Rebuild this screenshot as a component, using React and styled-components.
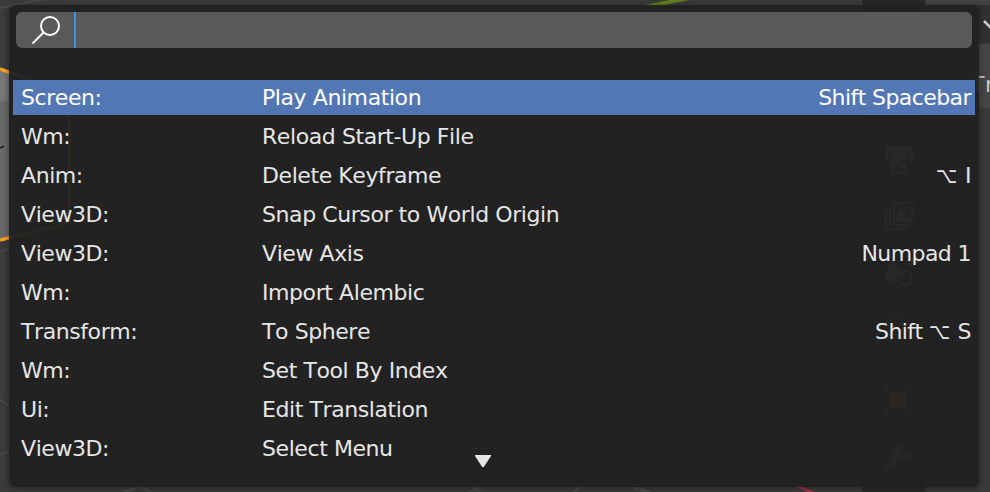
import React from "react";
import styled, { createGlobalStyle } from "styled-components";

const GlobalStyle = createGlobalStyle`
  body { margin: 0; background: #3b3b3b; overflow: hidden; }
  * { box-sizing: border-box; }
`;

const Screen = styled.div`
  position: relative;
  width: 990px;
  height: 492px;
  overflow: hidden;
  padding: 5px 11px 5px 9px;
  font-family: "DejaVu Sans", sans-serif;
  font-size: 22px;
  font-kerning: none;
`;

const Scene = styled.svg`
  position: absolute;
  inset: 0;
  display: block;
`;

const SidebarLabel = styled.span`
  position: absolute;
  left: 971px;
  top: 72px;
  line-height: 26px;
  letter-spacing: 0.5px;
  color: #c8c8c8;
`;

const Popup = styled.section`
  position: relative;
  display: flex;
  flex-direction: column;
  width: 970px;
  height: 482px;
  padding: 7px 4px 0;
  border-radius: 7px;
  background: rgba(33, 33, 33, 0.96);
  box-shadow: 0 1px 5px 1px rgba(20, 20, 20, 0.45);
`;

const SearchField = styled.div`
  display: flex;
  align-items: center;
  height: 36px;
  margin: 0 3px 32px;
  padding-left: 14px;
  border-radius: 6px;
  background: #595959;
`;

const SearchIcon = styled.svg`
  display: block;
  width: 32px;
  height: 32px;
`;

const Caret = styled.span`
  width: 2px;
  height: 36px;
  margin-left: 12px;
  background: #3399e6;
`;

const Results = styled.ul`
  display: flex;
  flex-direction: column;
  gap: 4px;
  margin: 0;
  padding: 0;
  list-style: none;
`;

const Result = styled.li`
  display: grid;
  grid-template-columns: 241px 1fr auto;
  height: 35px;
  padding: 0 4px 0 8px;
  line-height: 35px;
  white-space: nowrap;
  letter-spacing: -0.42px;
  color: ${(p) => (p.$active ? "#ffffff" : "#e6e6e6")};
  background: ${(p) => (p.$active ? "#5277b4" : "transparent")};
`;

const Shortcut = styled.span`
  letter-spacing: -0.58px;
`;

const OptionKey = styled.span`
  display: inline-block;
  margin: 0 1.5px 0 -4px;
  transform: scaleX(0.84);
  transform-origin: right;
`;

const MoreArrow = styled.svg`
  position: absolute;
  left: 466px;
  top: 450px;
  width: 16px;
  height: 12px;
`;

const RESULTS = [
  ["Screen:", "Play Animation", "Shift Spacebar"],
  ["Wm:", "Reload Start-Up File", ""],
  ["Anim:", "Delete Keyframe", "⌥ I"],
  ["View3D:", "Snap Cursor to World Origin", ""],
  ["View3D:", "View Axis", "Numpad 1"],
  ["Wm:", "Import Alembic", ""],
  ["Transform:", "To Sphere", "Shift ⌥ S"],
  ["Wm:", "Set Tool By Index", ""],
  ["Ui:", "Edit Translation", ""],
  ["View3D:", "Select Menu", ""],
];

const TABS = [134, 190, 246, 302, 374, 430];

function Viewport() {
  return (
    <Scene width="990" height="492" viewBox="0 0 990 492">
      <rect width="990" height="492" fill="#3b3b3b" />
      <g stroke="#515151" strokeWidth="2" fill="none" opacity="0.7">
        <path d="M0 455L350 320M120 494L490 322M0 400L140 486L165 500M110 500L320 400M230 322L330 400L483 494M450 500L700 395M320 370L650 494M570 494L800 350M400 466L490 423L650 492M0 252L230 150M0 8L60 -4" />
      </g>
      <path d="M0 3L130 3M60 1L240 4M300 2L600 4M0 18H12M0 31H12M0 49H12" stroke="#454545" strokeWidth="1" opacity=".6" />
      <path d="M0 69L9 72V238L0 240Z" fill="#767778" />
      <path d="M0 102L9 100V238L0 240Z" fill="#686969" />
      <path d="M0 69L69 94V223L0 240" stroke="#ff9f25" strokeWidth="3.5" fill="none" />
      <path d="M0 148L4 146" stroke="#191919" strokeWidth="1.5" />
      <path d="M69 134L330 70" stroke="#4b5926" strokeWidth="2" />
      <path d="M640 8L689 -2" stroke="#648020" strokeWidth="4" />
      <path d="M73 193L230 255L341 300L546 387L633 420L800 487L816 494" stroke="#a22f46" strokeWidth="3" fill="none" />

      <rect x="862" width="128" height="492" fill="#393939" />
      <rect x="862" width="63" height="492" fill="#292929" />
      <rect x="925" width="65" height="5" fill="#424242" />
      <rect x="925" y="5" width="65" height="38" fill="#303030" />
      <rect x="925" y="44" width="65" height="64" fill="#454545" />
      <path d="M970 11H978V20M978 30V37H970" stroke="#888" fill="none" />
      <path d="M984 21L990 27L997 20" stroke="#d0d0d0" strokeWidth="2.5" fill="none" />
      <path d="M943 79H957L950 86Z" fill="#606060" />
      {TABS.map((y) => (
        <rect key={y} x="873" y={y} width="52" height="52" rx="4" fill={y === 374 ? "#424242" : "#303030"} />
      ))}

      <g fill="#cfcfcf">
        <path d="M888 146H910Q913 146 913 149V158Q913 162 909 162V154H889V162Q885 162 885 158V149Q885 146 888 146Z" />
        <path fillRule="evenodd" d="M891 155H907V174H891ZM893 171H904L898 164ZM901 162a2 2 0 1 0 4 0a2 2 0 1 0-4 0" />
        <path fillRule="evenodd" d="M893 202H913V222H893ZM895 204V220H911V204Z" />
        <path d="M895 220L900 208L909 220ZM905 208a2 2 0 1 0 4 0a2 2 0 1 0-4 0" />
        <path d="M889 206H891V224H909V226H889ZM885 210H887V228H905V230H885Z" />
        <path d="M892 259L901 270Q895 274 894 282Q883 284 885 276Z" />
        <circle cx="910" cy="263" r="4" />
      </g>
      <circle cx="905" cy="278" r="7" stroke="#cfcfcf" strokeWidth="2" fill="none" />
      <path d="M901 278Q901 274 905 274" stroke="#cfcfcf" strokeWidth="1.5" fill="none" />
      <circle cx="899" cy="327" r="12" fill="none" stroke="#a8484e" strokeWidth="3" />
      <path d="M890 321L898 318L901 327L894 333ZM901 326L912 315" fill="#9e4046" stroke="#9e4046" strokeWidth="2" />
      <path d="M891 392H907V408H891Z" fill="#e0904a" />
      <path d="M886 393V387H893M905 387H912V393M912 406V413H905M893 413H886V406" fill="none" stroke="#be7932" strokeWidth="2" />
      <path d="M906 442Q892 441 893 456L886 463Q883 468 887 470Q890 471 894 467L901 460Q912 463 913 450L906 456L900 451Z" fill="#6792b5" />
    </Scene>
  );
}

function ShortcutLabel({ keys }) {
  const [before, after] = keys.split("⌥");
  if (after === undefined) return <Shortcut>{keys}</Shortcut>;
  return (
    <Shortcut>
      {before}
      <OptionKey>⌥</OptionKey>
      {after}
    </Shortcut>
  );
}

export default function App() {
  return (
    <Screen>
      <GlobalStyle />
      <Viewport />
      <SidebarLabel>Tr</SidebarLabel>
      <Popup>
        <SearchField>
          <SearchIcon viewBox="0 0 32 32" fill="none" stroke="#fff" strokeWidth="2">
            <circle cx="20" cy="12" r="9" />
            <path d="M13.5 18.5L2.5 29.5" />
          </SearchIcon>
          <Caret />
        </SearchField>
        <Results>
          {RESULTS.map(([category, name, shortcut], i) => (
            <Result key={name} $active={i === 0}>
              <span>{category}</span>
              <span>{name}</span>
              <ShortcutLabel keys={shortcut} />
            </Result>
          ))}
        </Results>
        <MoreArrow viewBox="0 0 16 12">
          <path d="M0 0H16V1L8.8 12H7.2L0 1Z" fill="#e6e6e6" />
        </MoreArrow>
      </Popup>
    </Screen>
  );
}
